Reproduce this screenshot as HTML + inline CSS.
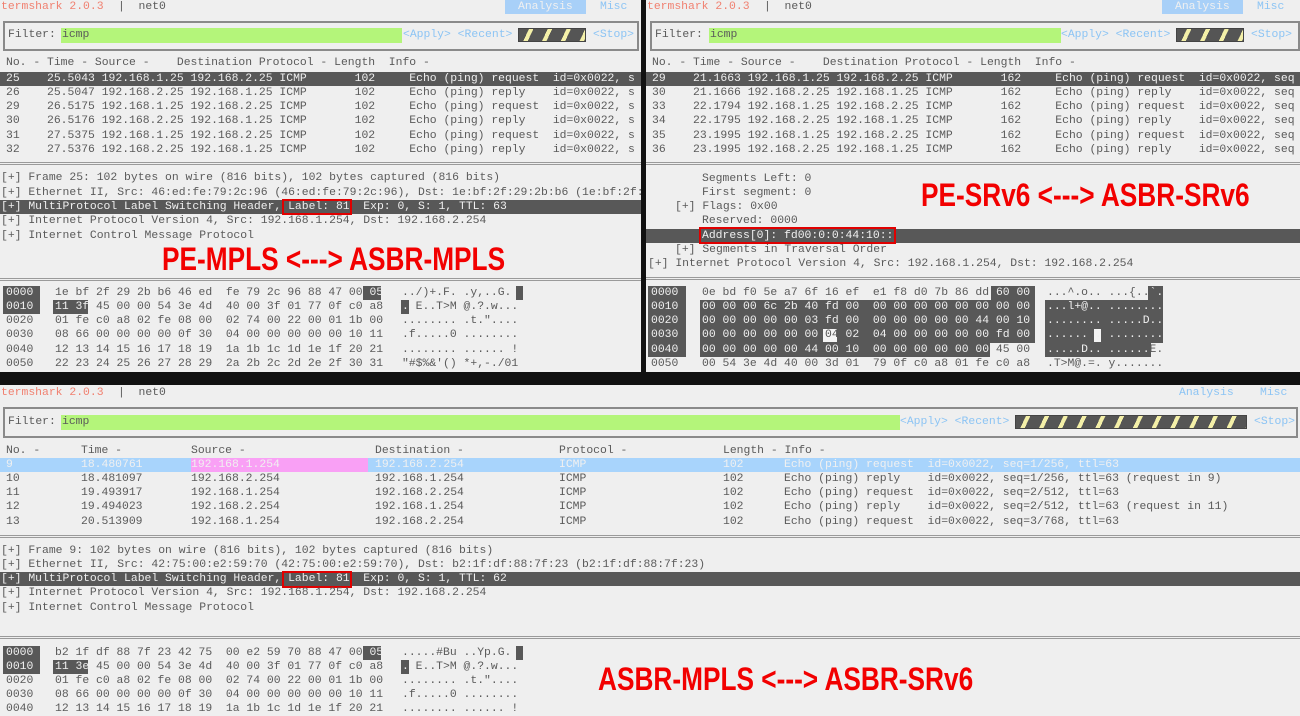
<!DOCTYPE html>
<html><head><meta charset="utf-8"><style>
body{margin:0;width:1300px;height:715px;background:#efefef;position:relative;overflow:hidden;font-family:"Liberation Mono","DejaVu Sans Mono",monospace;font-size:11.4px;color:#5a5a5a}
.a{position:absolute;white-space:pre;line-height:14px;height:14px}
.bar{position:absolute;height:14px}
.s{background:#585858}
.w{color:#f0f0f0}
.bl{color:#8cc4f4}
.ts{color:#f08070}
.box{position:absolute;border:2px solid #8a8a8a;box-sizing:border-box}
.green{position:absolute;background:#b4f57a;height:15px}
.haz{position:absolute;height:14px;background:repeating-linear-gradient(115deg,#555 0 9px,#f4f0a8 9px 13px,#555 13px 17px);border:1px solid #444;box-sizing:border-box}
.sep{position:absolute;height:1px;border-top:1px solid #9a9a9a;border-bottom:1px solid #9a9a9a}
.red{position:absolute;font-family:"Liberation Sans",sans-serif;font-weight:bold;font-size:32px;line-height:32px;color:#f20000;white-space:pre;transform:scaleX(0.82);transform-origin:0 0}
.rb{position:absolute;border:2px solid #e00000;box-sizing:border-box}
.hb{position:absolute;background:#585858}
.wb{position:absolute;background:#f4f4f4}
</style></head><body>

<div style="position:absolute;left:641px;top:0;width:5px;height:385px;background:#111"></div>
<div style="position:absolute;left:0;top:372px;width:1300px;height:13px;background:#111"></div>

<!-- ============ TOP LEFT ============ -->
<div class="a ts" style="left:1px;top:0">termshark 2.0.3</div>
<div class="a" style="left:118px;top:0">|  net0</div>
<div class="bar" style="left:505px;top:0;width:81px;background:#a8d0f8"></div>
<div class="a w" style="left:518px;top:0">Analysis</div>
<div class="a bl" style="left:600px;top:0">Misc</div>
<div class="box" style="left:3px;top:21px;width:636px;height:30px"></div>
<div class="a" style="left:8px;top:28px">Filter:</div>
<div class="green" style="left:61px;top:28px;width:341px"></div>
<div class="a" style="left:62px;top:28px">icmp</div>
<div class="a bl" style="left:403px;top:28px">&lt;Apply&gt; &lt;Recent&gt;</div>
<div class="haz" style="left:518px;top:28px;width:68px"></div>
<div class="a bl" style="left:593px;top:28px">&lt;Stop&gt;</div>

<div class="a" style="left:6px;top:56px">No. - Time - Source -    Destination Protocol - Length  Info -</div>
<div class="bar s" style="left:0;top:72px;width:641px"></div>
<div class="a w" style="left:6px;top:72px">25    25.5043 192.168.1.25 192.168.2.25 ICMP       102     Echo (ping) request  id=0x0022, s</div>
<div class="a" style="left:6px;top:86px">26    25.5047 192.168.2.25 192.168.1.25 ICMP       102     Echo (ping) reply    id=0x0022, s</div>
<div class="a" style="left:6px;top:100px">29    26.5175 192.168.1.25 192.168.2.25 ICMP       102     Echo (ping) request  id=0x0022, s</div>
<div class="a" style="left:6px;top:114px">30    26.5176 192.168.2.25 192.168.1.25 ICMP       102     Echo (ping) reply    id=0x0022, s</div>
<div class="a" style="left:6px;top:129px">31    27.5375 192.168.1.25 192.168.2.25 ICMP       102     Echo (ping) request  id=0x0022, s</div>
<div class="a" style="left:6px;top:143px">32    27.5376 192.168.2.25 192.168.1.25 ICMP       102     Echo (ping) reply    id=0x0022, s</div>
<div class="sep" style="left:0;top:162px;width:641px"></div>

<div class="a" style="left:1px;top:171px">[+] Frame 25: 102 bytes on wire (816 bits), 102 bytes captured (816 bits)</div>
<div class="a" style="left:1px;top:186px">[+] Ethernet II, Src: 46:ed:fe:79:2c:96 (46:ed:fe:79:2c:96), Dst: 1e:bf:2f:29:2b:b6 (1e:bf:2f:</div>
<div class="bar s" style="left:0;top:200px;width:641px"></div>
<div class="a w" style="left:1px;top:200px">[+] MultiProtocol Label Switching Header, Label: 81  Exp: 0, S: 1, TTL: 63</div>
<div class="rb" style="left:282px;top:199px;width:70px;height:16px"></div>
<div class="a" style="left:1px;top:214px">[+] Internet Protocol Version 4, Src: 192.168.1.254, Dst: 192.168.2.254</div>
<div class="a" style="left:1px;top:229px">[+] Internet Control Message Protocol</div>
<div class="red" style="left:162px;top:243px">PE-MPLS &lt;---&gt; ASBR-MPLS</div>
<div class="sep" style="left:0;top:278px;width:641px"></div>

<div class="hb" style="left:3px;top:286px;width:37px;height:28px"></div>
<div class="hb" style="left:363px;top:286px;width:18px;height:14px"></div>
<div class="hb" style="left:53px;top:300px;width:35px;height:14px"></div>
<div class="hb" style="left:516px;top:286px;width:7px;height:14px"></div>
<div class="hb" style="left:401px;top:300px;width:8px;height:14px"></div>
<div class="a w" style="left:6px;top:286px">0000</div><div class="a" style="left:55px;top:286px">1e bf 2f 29 2b b6 46 ed  fe 79 2c 96 88 47 00 <span class="w">05</span></div><div class="a" style="left:402px;top:286px">../)+.F. .y,..G.<span class="w">.</span></div>
<div class="a w" style="left:6px;top:300px">0010</div><div class="a" style="left:55px;top:300px"><span class="w">11 3f</span> 45 00 00 54 3e 4d  40 00 3f 01 77 0f c0 a8</div><div class="a" style="left:402px;top:300px"><span class="w">.?</span>E..T&gt;M @.?.w...</div>
<div class="a" style="left:6px;top:314px">0020</div><div class="a" style="left:55px;top:314px">01 fe c0 a8 02 fe 08 00  02 74 00 22 00 01 1b 00</div><div class="a" style="left:402px;top:314px">........ .t."....</div>
<div class="a" style="left:6px;top:328px">0030</div><div class="a" style="left:55px;top:328px">08 66 00 00 00 00 0f 30  04 00 00 00 00 00 10 11</div><div class="a" style="left:402px;top:328px">.f.....0 ........</div>
<div class="a" style="left:6px;top:343px">0040</div><div class="a" style="left:55px;top:343px">12 13 14 15 16 17 18 19  1a 1b 1c 1d 1e 1f 20 21</div><div class="a" style="left:402px;top:343px">........ ...... !</div>
<div class="a" style="left:6px;top:357px">0050</div><div class="a" style="left:55px;top:357px">22 23 24 25 26 27 28 29  2a 2b 2c 2d 2e 2f 30 31</div><div class="a" style="left:402px;top:357px">"#$%&amp;'() *+,-./01</div>

<!-- ============ TOP RIGHT ============ -->
<div class="a ts" style="left:647px;top:0">termshark 2.0.3</div>
<div class="a" style="left:764px;top:0">|  net0</div>
<div class="bar" style="left:1162px;top:0;width:81px;background:#a8d0f8"></div>
<div class="a w" style="left:1175px;top:0">Analysis</div>
<div class="a bl" style="left:1257px;top:0">Misc</div>
<div class="box" style="left:650px;top:21px;width:650px;height:30px"></div>
<div class="a" style="left:655px;top:28px">Filter:</div>
<div class="green" style="left:709px;top:28px;width:352px"></div>
<div class="a" style="left:710px;top:28px">icmp</div>
<div class="a bl" style="left:1061px;top:28px">&lt;Apply&gt; &lt;Recent&gt;</div>
<div class="haz" style="left:1176px;top:28px;width:68px"></div>
<div class="a bl" style="left:1251px;top:28px">&lt;Stop&gt;</div>

<div class="a" style="left:652px;top:56px">No. - Time - Source -    Destination Protocol - Length  Info -</div>
<div class="bar s" style="left:646px;top:72px;width:654px"></div>
<div class="a w" style="left:652px;top:72px">29    21.1663 192.168.1.25 192.168.2.25 ICMP       162     Echo (ping) request  id=0x0022, seq</div>
<div class="a" style="left:652px;top:86px">30    21.1666 192.168.2.25 192.168.1.25 ICMP       162     Echo (ping) reply    id=0x0022, seq</div>
<div class="a" style="left:652px;top:100px">33    22.1794 192.168.1.25 192.168.2.25 ICMP       162     Echo (ping) request  id=0x0022, seq</div>
<div class="a" style="left:652px;top:114px">34    22.1795 192.168.2.25 192.168.1.25 ICMP       162     Echo (ping) reply    id=0x0022, seq</div>
<div class="a" style="left:652px;top:129px">35    23.1995 192.168.1.25 192.168.2.25 ICMP       162     Echo (ping) request  id=0x0022, seq</div>
<div class="a" style="left:652px;top:143px">36    23.1995 192.168.2.25 192.168.1.25 ICMP       162     Echo (ping) reply    id=0x0022, seq</div>
<div class="sep" style="left:646px;top:162px;width:654px"></div>

<div class="a" style="left:702px;top:172px">Segments Left: 0</div>
<div class="a" style="left:702px;top:186px">First segment: 0</div>
<div class="a" style="left:675px;top:200px">[+] Flags: 0x00</div>
<div class="a" style="left:702px;top:214px">Reserved: 0000</div>
<div class="bar s" style="left:646px;top:229px;width:654px"></div>
<div class="a w" style="left:702px;top:229px">Address[0]: fd00:0:0:44:10::</div>
<div class="rb" style="left:699px;top:227px;width:197px;height:17px"></div>
<div class="a" style="left:675px;top:243px">[+] Segments in Traversal Order</div>
<div class="a" style="left:648px;top:257px">[+] Internet Protocol Version 4, Src: 192.168.1.254, Dst: 192.168.2.254</div>
<div class="red" style="left:921px;top:179px">PE-SRv6 &lt;---&gt; ASBR-SRv6</div>
<div class="sep" style="left:646px;top:277px;width:654px"></div>

<div class="hb" style="left:648px;top:286px;width:38px;height:71px"></div>
<div class="hb" style="left:991px;top:286px;width:44px;height:14px"></div>
<div class="hb" style="left:700px;top:300px;width:335px;height:43px"></div>
<div class="hb" style="left:700px;top:343px;width:290px;height:14px"></div>
<div class="wb" style="left:823px;top:329px;width:14px;height:13px"></div>
<div class="hb" style="left:1148px;top:286px;width:15px;height:14px"></div>
<div class="hb" style="left:1045px;top:300px;width:118px;height:43px"></div>
<div class="hb" style="left:1045px;top:343px;width:106px;height:14px"></div>
<div class="wb" style="left:1094px;top:329px;width:7px;height:13px"></div>
<div class="a w" style="left:651px;top:286px">0000</div><div class="a" style="left:702px;top:286px">0e bd f0 5e a7 6f 16 ef  e1 f8 d0 7b 86 dd <span class="w">60 00</span></div><div class="a" style="left:1047px;top:286px">...^.o.. ...{..<span class="w">`.</span></div>
<div class="a w" style="left:651px;top:300px">0010</div><div class="a w" style="left:702px;top:300px">00 00 00 6c 2b 40 fd 00  00 00 00 00 00 00 00 00</div><div class="a w" style="left:1047px;top:300px">...l+@.. ........</div>
<div class="a w" style="left:651px;top:314px">0020</div><div class="a w" style="left:702px;top:314px">00 00 00 00 00 03 fd 00  00 00 00 00 00 44 00 10</div><div class="a w" style="left:1047px;top:314px">........ .....D..</div>
<div class="a w" style="left:651px;top:328px">0030</div><div class="a w" style="left:702px;top:328px">00 00 00 00 00 00 <span style="color:#555">04</span> 02  04 00 00 00 00 00 fd 00</div><div class="a w" style="left:1047px;top:328px">......<span style="color:#555">.</span>. ........</div>
<div class="a w" style="left:651px;top:343px">0040</div><div class="a" style="left:702px;top:343px"><span class="w">00 00 00 00 00 44 00 10  00 00 00 00 00 00</span> 45 00</div><div class="a" style="left:1047px;top:343px"><span class="w">.....D.. ......</span>E.</div>
<div class="a" style="left:651px;top:357px">0050</div><div class="a" style="left:702px;top:357px">00 54 3e 4d 40 00 3d 01  79 0f c0 a8 01 fe c0 a8</div><div class="a" style="left:1047px;top:357px">.T&gt;M@.=. y.......</div>

<!-- ============ BOTTOM ============ -->
<div class="a ts" style="left:1px;top:386px">termshark 2.0.3</div>
<div class="a" style="left:118px;top:386px">|  net0</div>
<div class="a bl" style="left:1179px;top:386px">Analysis</div>
<div class="a bl" style="left:1260px;top:386px">Misc</div>
<div class="box" style="left:3px;top:407px;width:1295px;height:31px"></div>
<div class="a" style="left:8px;top:415px">Filter:</div>
<div class="green" style="left:61px;top:415px;width:839px"></div>
<div class="a" style="left:62px;top:415px">icmp</div>
<div class="a bl" style="left:900px;top:415px">&lt;Apply&gt; &lt;Recent&gt;</div>
<div class="haz" style="left:1015px;top:415px;width:232px"></div>
<div class="a bl" style="left:1254px;top:415px">&lt;Stop&gt;</div>

<div class="a" style="left:6px;top:444px">No. -</div><div class="a" style="left:81px;top:444px">Time -</div><div class="a" style="left:191px;top:444px">Source -</div><div class="a" style="left:375px;top:444px">Destination -</div><div class="a" style="left:559px;top:444px">Protocol -</div><div class="a" style="left:723px;top:444px">Length - Info -</div>
<div class="bar" style="left:0;top:458px;width:1300px;background:#a8d4fc"></div>
<div class="bar" style="left:191px;top:458px;width:177px;background:#f9a0f5"></div>
<div class="a w" style="left:6px;top:458px">9</div><div class="a w" style="left:81px;top:458px">18.480761</div><div class="a w" style="left:191px;top:458px">192.168.1.254</div><div class="a w" style="left:375px;top:458px">192.168.2.254</div><div class="a w" style="left:559px;top:458px">ICMP</div><div class="a w" style="left:723px;top:458px">102</div><div class="a w" style="left:784px;top:458px">Echo (ping) request  id=0x0022, seq=1/256, ttl=63</div>
<div class="a" style="left:6px;top:472px">10</div><div class="a" style="left:81px;top:472px">18.481097</div><div class="a" style="left:191px;top:472px">192.168.2.254</div><div class="a" style="left:375px;top:472px">192.168.1.254</div><div class="a" style="left:559px;top:472px">ICMP</div><div class="a" style="left:723px;top:472px">102</div><div class="a" style="left:784px;top:472px">Echo (ping) reply    id=0x0022, seq=1/256, ttl=63 (request in 9)</div>
<div class="a" style="left:6px;top:486px">11</div><div class="a" style="left:81px;top:486px">19.493917</div><div class="a" style="left:191px;top:486px">192.168.1.254</div><div class="a" style="left:375px;top:486px">192.168.2.254</div><div class="a" style="left:559px;top:486px">ICMP</div><div class="a" style="left:723px;top:486px">102</div><div class="a" style="left:784px;top:486px">Echo (ping) request  id=0x0022, seq=2/512, ttl=63</div>
<div class="a" style="left:6px;top:500px">12</div><div class="a" style="left:81px;top:500px">19.494023</div><div class="a" style="left:191px;top:500px">192.168.2.254</div><div class="a" style="left:375px;top:500px">192.168.1.254</div><div class="a" style="left:559px;top:500px">ICMP</div><div class="a" style="left:723px;top:500px">102</div><div class="a" style="left:784px;top:500px">Echo (ping) reply    id=0x0022, seq=2/512, ttl=63 (request in 11)</div>
<div class="a" style="left:6px;top:515px">13</div><div class="a" style="left:81px;top:515px">20.513909</div><div class="a" style="left:191px;top:515px">192.168.1.254</div><div class="a" style="left:375px;top:515px">192.168.2.254</div><div class="a" style="left:559px;top:515px">ICMP</div><div class="a" style="left:723px;top:515px">102</div><div class="a" style="left:784px;top:515px">Echo (ping) request  id=0x0022, seq=3/768, ttl=63</div>
<div class="sep" style="left:0;top:535px;width:1300px"></div>

<div class="a" style="left:1px;top:544px">[+] Frame 9: 102 bytes on wire (816 bits), 102 bytes captured (816 bits)</div>
<div class="a" style="left:1px;top:558px">[+] Ethernet II, Src: 42:75:00:e2:59:70 (42:75:00:e2:59:70), Dst: b2:1f:df:88:7f:23 (b2:1f:df:88:7f:23)</div>
<div class="bar s" style="left:0;top:572px;width:1300px"></div>
<div class="a w" style="left:1px;top:572px">[+] MultiProtocol Label Switching Header, Label: 81  Exp: 0, S: 1, TTL: 62</div>
<div class="rb" style="left:282px;top:571px;width:70px;height:17px"></div>
<div class="a" style="left:1px;top:586px">[+] Internet Protocol Version 4, Src: 192.168.1.254, Dst: 192.168.2.254</div>
<div class="a" style="left:1px;top:601px">[+] Internet Control Message Protocol</div>
<div class="sep" style="left:0;top:636px;width:1300px"></div>

<div class="hb" style="left:3px;top:646px;width:37px;height:28px"></div>
<div class="hb" style="left:363px;top:646px;width:18px;height:14px"></div>
<div class="hb" style="left:53px;top:660px;width:35px;height:14px"></div>
<div class="hb" style="left:516px;top:646px;width:7px;height:14px"></div>
<div class="hb" style="left:401px;top:660px;width:8px;height:14px"></div>
<div class="a w" style="left:6px;top:646px">0000</div><div class="a" style="left:55px;top:646px">b2 1f df 88 7f 23 42 75  00 e2 59 70 88 47 00 <span class="w">05</span></div><div class="a" style="left:402px;top:646px">.....#Bu ..Yp.G.<span class="w">.</span></div>
<div class="a w" style="left:6px;top:660px">0010</div><div class="a" style="left:55px;top:660px"><span class="w">11 3e</span> 45 00 00 54 3e 4d  40 00 3f 01 77 0f c0 a8</div><div class="a" style="left:402px;top:660px"><span class="w">.&gt;</span>E..T&gt;M @.?.w...</div>
<div class="a" style="left:6px;top:674px">0020</div><div class="a" style="left:55px;top:674px">01 fe c0 a8 02 fe 08 00  02 74 00 22 00 01 1b 00</div><div class="a" style="left:402px;top:674px">........ .t."....</div>
<div class="a" style="left:6px;top:688px">0030</div><div class="a" style="left:55px;top:688px">08 66 00 00 00 00 0f 30  04 00 00 00 00 00 10 11</div><div class="a" style="left:402px;top:688px">.f.....0 ........</div>
<div class="a" style="left:6px;top:702px">0040</div><div class="a" style="left:55px;top:702px">12 13 14 15 16 17 18 19  1a 1b 1c 1d 1e 1f 20 21</div><div class="a" style="left:402px;top:702px">........ ...... !</div>
<div class="red" style="left:598px;top:663px">ASBR-MPLS &lt;---&gt; ASBR-SRv6</div>

</body></html>
